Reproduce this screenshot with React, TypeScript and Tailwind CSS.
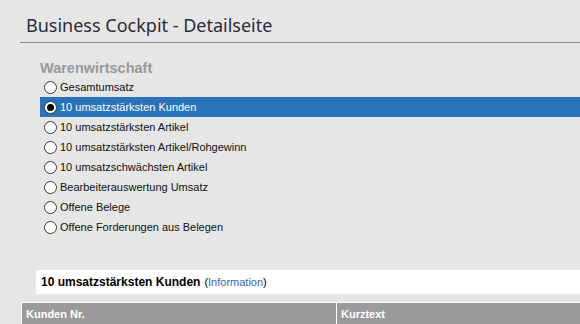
import React from "react";

const items = [
  "Gesamtumsatz",
  "10 umsatzstärksten Kunden",
  "10 umsatzstärksten Artikel",
  "10 umsatzstärksten Artikel/Rohgewinn",
  "10 umsatzschwächsten Artikel",
  "Bearbeiterauswertung Umsatz",
  "Offene Belege",
  "Offene Forderungen aus Belegen",
];

function Radio({ checked }: { checked: boolean }) {
  return (
    <span className="flex h-[13px] w-[13px] shrink-0 items-center justify-center rounded-full border border-[#3a3a3a] bg-white">
      {checked && <span className="h-[7px] w-[7px] rounded-full bg-black" />}
    </span>
  );
}

export default function App() {
  return (
    <div className="h-[324px] w-[580px] overflow-hidden bg-[#e6e6e6] font-['Liberation_Sans',sans-serif]">
      <div className="ml-[20px] h-[43px] border-b border-[#8c8c8c] pl-[6px] pt-[14px]">
        <h1 className="font-['Noto_Sans',sans-serif] text-[18px] leading-[22px] text-[#2b2b3a]">
          Business Cockpit - Detailseite
        </h1>
      </div>
      <div className="pl-[40px] pt-[17px]">
        <div className="text-[14.5px] font-bold leading-[17px] text-[#999999]">Warenwirtschaft</div>
        <div className="flex flex-col">
          {items.map((t, i) => {
            const sel = i === 1;
            return (
              <div
                key={t}
                className={`flex h-[20px] items-center gap-[3px] pl-[4px] text-[11px] ${
                  sel ? "bg-[#2a72b9] text-white" : "text-[#111]"
                }`}
              >
                <Radio checked={sel} />
                <span>{t}</span>
              </div>
            );
          })}
        </div>
      </div>
      <div className="ml-[36px] mt-[33px] flex h-[24px] items-center bg-white pl-[5px] text-[11px] text-black">
        <span className="text-[12px] font-bold">10 umsatzstärksten Kunden</span>
        <span className="ml-[4px]">
          (<span className="text-[#3a64a8]">Information</span>)
        </span>
      </div>
      <div className="ml-[21px] mt-[8px] flex h-[24px] border-l border-t border-white bg-[#9b9b9e] text-[11px] font-bold text-white">
        <div className="flex w-[315px] items-center border-r border-white pl-[4px]">Kunden Nr.</div>
        <div className="flex flex-1 items-center pl-[4px]">Kurztext</div>
      </div>
    </div>
  );
}
